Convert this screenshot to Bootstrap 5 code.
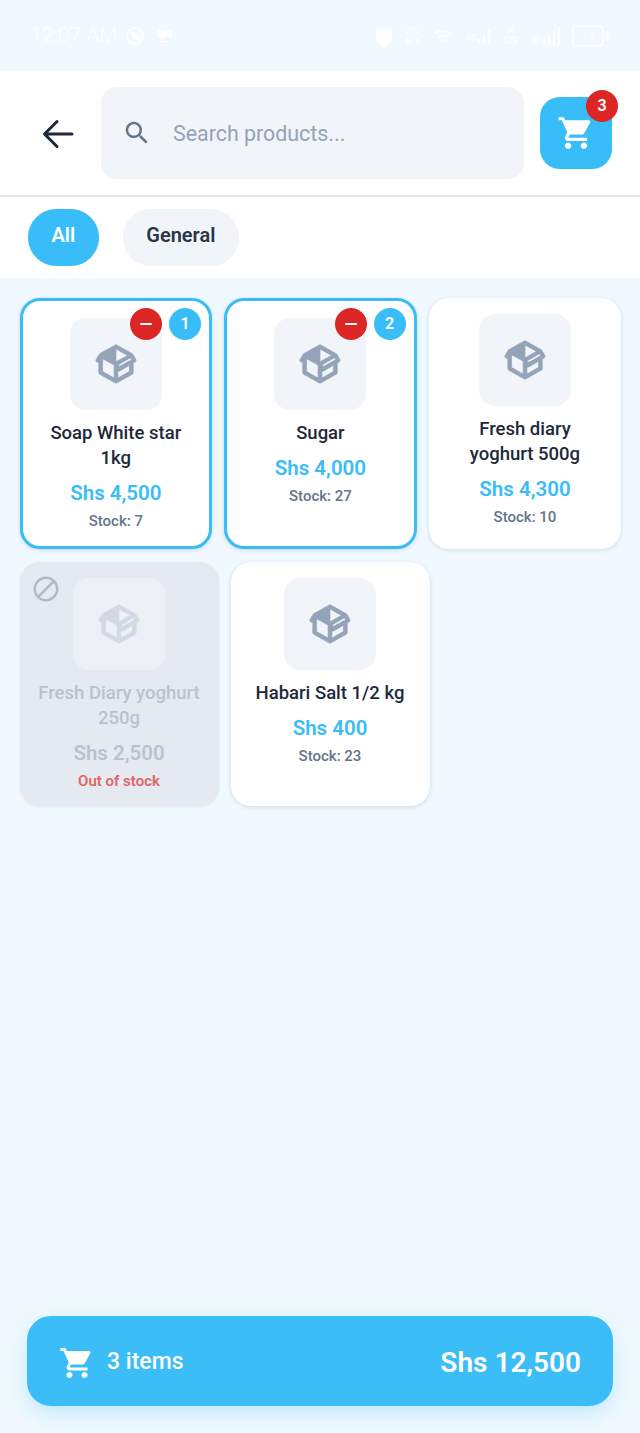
<!DOCTYPE html>
<html lang="en">
<head>
    <meta charset="UTF-8">
    <meta name="viewport" content="width=device-width, initial-scale=1.0">
    <title>Select products</title>
    <link rel="stylesheet" href="https://cdn.jsdelivr.net/npm/bootstrap@5.3.0/dist/css/bootstrap.min.css">
    <style>
        body {
            background-color: #f0f9ff;
            font-family: Roboto, sans-serif;
            color: #1e293b;
        }

        .screen { min-height: 1433px; }

        /* status bar */
        .status-bar {
            height: 71px;
            padding: 0 30px;
            color: #fff;
        }
        .status-time { font-size: 21px; font-weight: 300; line-height: 1; }
        .status-right { gap: 12.500px; }
        .status-tiny { font-size: 9px; line-height: 10px; text-align: center; font-weight: 500; }

        /* header */
        .top-bar {
            height: 126px;
            padding: 16px 21px 0 0;
            border-bottom: 2px solid #e2e8f0;
            align-items: flex-start;
        }
        .back-btn { width: 101px; height: 92px; padding: 1px 0 0 15px; }
        .search-box {
            width: 423px;
            height: 92px;
            background: #f1f5f9;
            border-radius: 16px;
            padding-left: 21px;
            gap: 21px;
        }
        .search-hint { font-size: 21.400px; color: #94a3b8; padding-top: 2px; }
        .cart-btn {
            width: 72px;
            height: 72px;
            margin: 10px 0 0 16px;
            background: #38bdf8;
            border-radius: 20px;
        }
        .cart-count {
            top: -7px;
            right: -6px;
            background: #dc2626;
        }
        .round-tag {
            width: 32px;
            height: 32px;
            border-radius: 50%;
            color: #fff;
            font-size: 16px;
            font-weight: 600;
        }

        /* category chips */
        .chip-row { height: 81px; padding: 12px 28px; gap: 24px; }
        .chip {
            height: 57px;
            padding: 0 22.500px 6px;
            border-radius: 28px;
            font-size: 20px;
            font-weight: 600;
            color: #293548;
            background: #f1f5f9;
            border: 1px solid #f1f5f9;
        }
        .chip-on { background: #38bdf8; border-color: #38bdf8; color: #fff; }

        /* product grid */
        .product-grid {
            padding: 20px 18px 20px 19.500px;
            gap: 13px 12px;
        }
        .product {
            width: 192.600px;
            background: #fff;
            border-radius: 20px;
            padding: 16px 17px 0;
            box-shadow: 0 1px 4px rgba(15, 23, 42, .14);
            text-align: center;
        }
        .product-wide { width: 199px; height: 244px; padding: 16px 16px 0; }
        .product-tall { height: 251px; }
        .product-picked { border: 3px solid #38bdf8; padding: 17px 14px 0; }
        .thumb {
            width: 92px;
            height: 92px;
            border-radius: 16px;
            background: #f1f5f9;
            margin: 0 auto 11px;
        }
        .thumb svg { stroke: #94a3b8; stroke-width: .35; }
        .product-name { font-size: 18.500px; font-weight: 500; line-height: 25px; color: #1e293b; }
        .product-price { font-size: 20.500px; font-weight: 600; line-height: 28px; margin-top: 8px; color: #38bdf8; }
        .product-stock { font-size: 15px; font-weight: 500; line-height: 20px; margin-top: 4px; color: #64748b; }
        .tag-count { top: 7px; right: 8px; background: #38bdf8; }
        .tag-minus { top: 7px; right: 47px; background: #dc2626; }

        .product-out { background: #e5eaf1; box-shadow: 0 1px 3px rgba(15, 23, 42, .08); }
        .product-out .thumb { background: #edf1f6; }
        .product-out .thumb svg { stroke: #d2d9e3; }
        .product-out .product-name,
        .product-out .product-price { color: #b9c2cf; }
        .product-out .product-stock { color: #e06565; font-weight: 600; }
        .ban-icon { top: 12px; left: 11px; }

        /* checkout bar */
        .checkout-bar {
            height: 90px;
            margin: auto 27px 27px;
            padding: 3px 32px 0;
            background: #3bbdf8;
            border-radius: 24px;
            color: #fff;
            box-shadow: 0 8px 20px rgba(56, 189, 248, .25);
        }
        .checkout-left { gap: 12px; }
        .checkout-items { font-size: 23px; font-weight: 500; }
        .checkout-total { font-size: 28px; font-weight: 600; }
    </style>
</head>
<body>
    <div class="screen d-flex flex-column">

        <div class="status-bar d-flex align-items-center justify-content-between">
            <div class="d-flex align-items-center gap-2">
                <span class="status-time">12:07 AM</span>
                <svg width="20" height="20" viewBox="0 0 20 20" fill="none" stroke="#fff" stroke-width="1.6"><circle cx="10" cy="10" r="8"/><path d="M7 6.500c0 4 2.500 6.500 6.500 7l.5-2-2-.8-1 .8c-1-.5-1.700-1.300-2-2.300l.8-1L9 6z"/></svg>
                <svg width="16" height="14" viewBox="0 0 16 14" fill="#fff" class="ms-1"><path d="M1 1h14v7H9l-2 2H4v-1H1zM3 12h10v1H3z"/></svg>
            </div>
            <div class="status-right d-flex align-items-center">
                <svg width="18" height="20" viewBox="0 0 18 20" fill="#fff"><path d="M1 2l3 1 5-2 5 2 3-1v10c0 4-4 7-8 8-4-1-8-4-8-8z"/></svg>
                <div class="status-tiny">252<br>B/S</div>
                <svg width="20" height="16" viewBox="0 0 20 16" fill="none" stroke="#fff" stroke-width="1.600"><path d="M2 5c5-3 11-3 16 0M5 9c3-2 7-2 10 0M8 13c1-1 3-1 4 0"/></svg>
                <div class="d-flex align-items-end"><span class="status-tiny">4G</span>
                    <svg width="14" height="14" viewBox="0 0 14 14" fill="#fff"><path d="M1 10h2v4H1zM6 6h2v8H6zM11 1h2v13h-2z"/></svg></div>
                <div class="status-tiny">R<br>LTE</div>
                <div class="d-flex align-items-end"><span class="status-tiny">4G</span>
                    <svg width="18" height="18" viewBox="0 0 18 18" fill="#fff"><path d="M1 12h2v6H1zM6 8h2v10H6zM11 4h2v14h-2zM16 0h2v18h-2z"/></svg></div>
                <svg width="38" height="22" viewBox="0 0 38 22" fill="none" stroke="#fff" stroke-width="1.500"><rect x="1" y="1" width="30" height="20" rx="3"/><rect x="35" y="7" width="2" height="8" fill="#fff"/><text x="16" y="15" font-size="11" text-anchor="middle" fill="#fff" stroke="none" font-family="Roboto">78</text></svg>
            </div>
        </div>

        <div class="bg-white">
            <div class="top-bar d-flex">
                <button class="back-btn btn border-0 d-flex align-items-center justify-content-center" type="button" aria-label="Back">
                    <svg width="32" height="30" viewBox="0 0 32 30" fill="none" stroke="#1e293b" stroke-width="3" stroke-linecap="round" stroke-linejoin="round"><path d="M15 2.500 2.500 15 15 27.500M3 15h27"/></svg>
                </button>
                <div class="search-box d-flex align-items-center">
                    <svg width="30" height="30" viewBox="0 0 24 24" fill="#64748b"><path d="M15.500 14h-.79l-.28-.27C15.410 12.590 16 11.110 16 9.500 16 5.910 13.090 3 9.500 3S3 5.910 3 9.500 5.910 16 9.500 16c1.610 0 3.090-.59 4.230-1.570l.27.28v.79l5 4.990L20.490 19l-4.990-5zm-6 0C7.010 14 5 11.990 5 9.500S7.010 5 9.500 5 14 7.010 14 9.500 11.990 14 9.500 14z"/></svg>
                    <span class="search-hint">Search products...</span>
                </div>
                <div class="cart-btn position-relative d-flex align-items-center justify-content-center">
                    <svg width="38" height="38" viewBox="0 0 24 24" fill="#fff"><path d="M7 18c-1.100 0-1.990.9-1.990 2S5.900 22 7 22s2-.9 2-2-.9-2-2-2zM1 2v2h2l3.600 7.590-1.350 2.450c-.16.28-.25.61-.25.96 0 1.100.9 2 2 2h12v-2H7.420c-.14 0-.25-.11-.25-.25l.03-.12.9-1.630h7.450c.75 0 1.410-.41 1.750-1.030l3.580-6.490c.08-.14.12-.31.12-.48 0-.55-.45-1-1-1H5.210l-.94-2H1zm16 16c-1.100 0-1.990.9-1.990 2s.89 2 1.990 2 2-.9 2-2-.9-2-2-2z"/></svg>
                    <span class="round-tag cart-count position-absolute d-flex align-items-center justify-content-center">3</span>
                </div>
            </div>
            <div class="chip-row d-flex">
                <div class="chip chip-on d-flex align-items-center">All</div>
                <div class="chip d-flex align-items-center">General</div>
            </div>
        </div>

        <div class="product-grid d-flex flex-wrap">

            <div class="product product-picked product-tall position-relative">
                <span class="round-tag tag-minus position-absolute d-flex align-items-center justify-content-center"><svg width="14" height="14" viewBox="0 0 14 14" stroke="#fff" stroke-width="2" stroke-linecap="round"><path d="M2 7h10"/></svg></span>
                <span class="round-tag tag-count position-absolute d-flex align-items-center justify-content-center">1</span>
                <div class="thumb d-flex align-items-center justify-content-center">
                    <svg width="46" height="46" viewBox="0 0 24 24" fill="#94a3b8"><use href="#box"/></svg>
                </div>
                <div class="product-name">Soap White star 1kg</div>
                <div class="product-price">Shs 4,500</div>
                <div class="product-stock">Stock: 7</div>
            </div>

            <div class="product product-picked product-tall position-relative">
                <span class="round-tag tag-minus position-absolute d-flex align-items-center justify-content-center"><svg width="14" height="14" viewBox="0 0 14 14" stroke="#fff" stroke-width="2" stroke-linecap="round"><path d="M2 7h10"/></svg></span>
                <span class="round-tag tag-count position-absolute d-flex align-items-center justify-content-center">2</span>
                <div class="thumb d-flex align-items-center justify-content-center">
                    <svg width="46" height="46" viewBox="0 0 24 24" fill="#94a3b8"><use href="#box"/></svg>
                </div>
                <div class="product-name">Sugar</div>
                <div class="product-price">Shs 4,000</div>
                <div class="product-stock">Stock: 27</div>
            </div>

            <div class="product product-tall position-relative">
                <div class="thumb d-flex align-items-center justify-content-center">
                    <svg width="46" height="46" viewBox="0 0 24 24" fill="#94a3b8"><use href="#box"/></svg>
                </div>
                <div class="product-name">Fresh diary yoghurt 500g</div>
                <div class="product-price">Shs 4,300</div>
                <div class="product-stock">Stock: 10</div>
            </div>

            <div class="product product-wide product-out position-relative">
                <svg class="ban-icon position-absolute" width="30" height="30" viewBox="0 0 24 24" fill="#b0bac8"><path d="M12 2C6.480 2 2 6.480 2 12s4.480 10 10 10 10-4.480 10-10S17.520 2 12 2zM4 12c0-4.420 3.580-8 8-8 1.850 0 3.550.63 4.900 1.690L5.690 16.900C4.630 15.550 4 13.850 4 12zm8 8c-1.850 0-3.550-.63-4.900-1.690L18.310 7.100C19.370 8.450 20 10.150 20 12c0 4.420-3.580 8-8 8z"/></svg>
                <div class="thumb d-flex align-items-center justify-content-center">
                    <svg width="46" height="46" viewBox="0 0 24 24" fill="#d2d9e3"><use href="#box"/></svg>
                </div>
                <div class="product-name">Fresh Diary yoghurt 250g</div>
                <div class="product-price">Shs 2,500</div>
                <div class="product-stock">Out of stock</div>
            </div>

            <div class="product product-wide position-relative">
                <div class="thumb d-flex align-items-center justify-content-center">
                    <svg width="46" height="46" viewBox="0 0 24 24" fill="#94a3b8"><use href="#box"/></svg>
                </div>
                <div class="product-name">Habari Salt 1/2 kg</div>
                <div class="product-price">Shs 400</div>
                <div class="product-stock">Stock: 23</div>
            </div>
        </div>

        <div class="checkout-bar d-flex align-items-center justify-content-between">
            <div class="checkout-left d-flex align-items-center">
                <svg width="36" height="36" viewBox="0 0 24 24" fill="#fff"><path d="M7 18c-1.100 0-1.990.9-1.990 2S5.900 22 7 22s2-.9 2-2-.9-2-2-2zM1 2v2h2l3.600 7.590-1.350 2.450c-.16.28-.25.61-.25.96 0 1.100.9 2 2 2h12v-2H7.420c-.14 0-.25-.11-.25-.25l.03-.12.9-1.630h7.450c.75 0 1.410-.41 1.750-1.030l3.580-6.490c.08-.14.12-.31.12-.48 0-.55-.45-1-1-1H5.210l-.94-2H1zm16 16c-1.100 0-1.990.9-1.990 2s.89 2 1.990 2 2-.9 2-2-.9-2-2-2z"/></svg>
                <span class="checkout-items">3 items</span>
            </div>
            <span class="checkout-total">Shs 12,500</span>
        </div>
    </div>

    <svg width="0" height="0" class="position-absolute">
        <symbol id="box" viewBox="0 0 24 24"><path d="M2,10.960C1.500,10.680 1.350,10.070 1.630,9.590L3.130,7C3.240,6.800 3.410,6.660 3.600,6.580L11.430,2.180C11.590,2.060 11.790,2 12,2C12.210,2 12.410,2.060 12.570,2.180L20.470,6.620C20.660,6.720 20.820,6.880 20.910,7.080L22.360,9.600C22.640,10.080 22.470,10.690 22,10.960L21,11.540V16.500C21,16.880 20.790,17.210 20.470,17.380L12.570,21.820C12.410,21.940 12.210,22 12,22C11.790,22 11.590,21.940 11.430,21.820L3.530,17.380C3.210,17.210 3,16.880 3,16.500V10.960C2.700,11.130 2.320,11.140 2,10.960M12,4.150V4.150L12,10.850V10.850L17.960,7.500L12,4.150M5,15.910L11,19.290V12.580L5,9.210V15.910M19,15.910V12.690L14,15.590C13.670,15.770 13.300,15.760 13,15.600V19.290L19,15.910M13.850,13.360L20.130,9.730L19.550,8.720L13.270,12.350L13.850,13.360Z"/></symbol>
    </svg>

    <script src="https://cdn.jsdelivr.net/npm/bootstrap@5.3.0/dist/js/bootstrap.bundle.min.js"></script>
</body>
</html>
